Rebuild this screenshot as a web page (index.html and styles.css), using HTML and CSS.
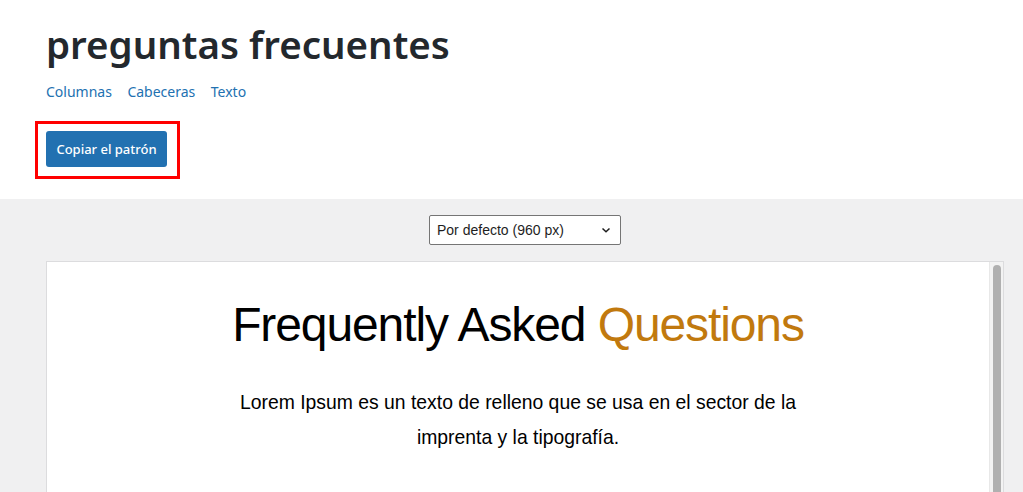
FILE: index.html
```html
<!DOCTYPE html>
<html lang="es">
<head>
<meta charset="utf-8">
<title>preguntas frecuentes</title>
<link rel="stylesheet" href="styles.css">
</head>
<body>
<header class="pattern-header">
  <h1 class="pattern-title">preguntas frecuentes</h1>
  <nav class="pattern-cats">
    <a href="#">Columnas</a>
    <a href="#">Cabeceras</a>
    <a href="#">Texto</a>
  </nav>
  <div class="copy-wrap">
    <button class="copy-btn" type="button">Copiar el patrón</button>
  </div>
</header>
<section class="preview-area">
  <div class="select-box">
    <span>Por defecto (960 px)</span>
    <svg class="chev" width="12" height="12" viewBox="0 0 12 12"><path d="M2.5 4.5 L6 7.8 L9.5 4.5" fill="none" stroke="#1e1e1e" stroke-width="1.5"/></svg>
  </div>
  <div class="frame">
    <div class="frame-content">
      <h2 class="faq-title">Frequently Asked <span class="accent">Questions</span></h2>
      <p class="faq-text">Lorem Ipsum es un texto de relleno que se usa en el sector de la imprenta y la tipografía.</p>
    </div>
    <div class="scrollbar"><div class="thumb"></div></div>
  </div>
</section>
</body>
</html>
```
FILE: styles.css
```css
html, body {
  margin: 0;
  padding: 0;
  background: #fff;
}
body {
  font-family: "Noto Sans", "Open Sans", sans-serif;
  color: #1d2327;
  height: 492px;
  overflow: hidden;
  display: flex;
  flex-direction: column;
}
.pattern-header {
  padding: 20px 46px 0 46px;
  display: flex;
  flex-direction: column;
  align-items: flex-start;
  flex-shrink: 0;
}
.pattern-title {
  margin: 0;
  font-size: 38.5px;
  line-height: 48px;
  font-weight: 600;
  color: #23282d;
}
.pattern-cats {
  margin-top: 14px;
  display: flex;
  gap: 15.5px;
  font-size: 14px;
  line-height: 20px;
}
.pattern-cats a {
  color: #2271b1;
  text-decoration: none;
}
.copy-wrap {
  margin-top: 19px;
  margin-left: -11px;
  border: 3px solid #ff0000;
  padding: 7px 10px 9px 8px;
}
.copy-btn {
  display: block;
  background: #2271b1;
  color: #fff;
  border: 0;
  border-radius: 3px;
  font-family: "Noto Sans", "Open Sans", sans-serif;
  font-size: 13px;
  font-weight: 500;
  height: 36px;
  width: 121px;
  padding: 0;
}
.preview-area {
  margin-top: 20px;
  background: #f0f0f1;
  padding: 16px 19px 0 46px;
  display: flex;
  flex-direction: column;
  align-items: center;
  flex: 1;
  min-height: 0;
}
.select-box {
  box-sizing: border-box;
  flex-shrink: 0;
  width: 192px;
  height: 30px;
  background: #fff;
  border: 1px solid #757575;
  border-radius: 2px;
  display: flex;
  align-items: center;
  justify-content: space-between;
  padding: 0 8px 0 7px;
  font-family: "Liberation Sans", Arial, sans-serif;
  font-size: 14px;
  color: #1e1e1e;
}
.chev {
  display: block;
}
.frame {
  align-self: stretch;
  margin-top: 16px;
  background: #fff;
  border: 1px solid #dcdcde;
  border-bottom: 0;
  display: flex;
  flex: 1;
  min-height: 0;
  overflow: hidden;
}
.frame-content {
  flex: 1;
  display: flex;
  flex-direction: column;
  align-items: center;
  font-family: "Liberation Sans", Arial, sans-serif;
  color: #000;
}
.faq-title {
  margin: 34px 0 0;
  font-size: 48px;
  line-height: 58px;
  font-weight: 400;
  letter-spacing: -1.1px;
}
.accent {
  color: #c1790e;
}
.faq-text {
  margin: 31px 0 0;
  max-width: 580px;
  text-align: center;
  font-size: 19.35px;
  line-height: 35px;
}
.scrollbar {
  width: 13px;
  border-left: 1px solid #e8e8e8;
  background: #f3f3f3;
  display: flex;
  justify-content: center;
  padding-top: 3px;
}
.thumb {
  width: 8px;
  height: 400px;
  background: #b0b0b0;
  border-radius: 4px;
}
```
